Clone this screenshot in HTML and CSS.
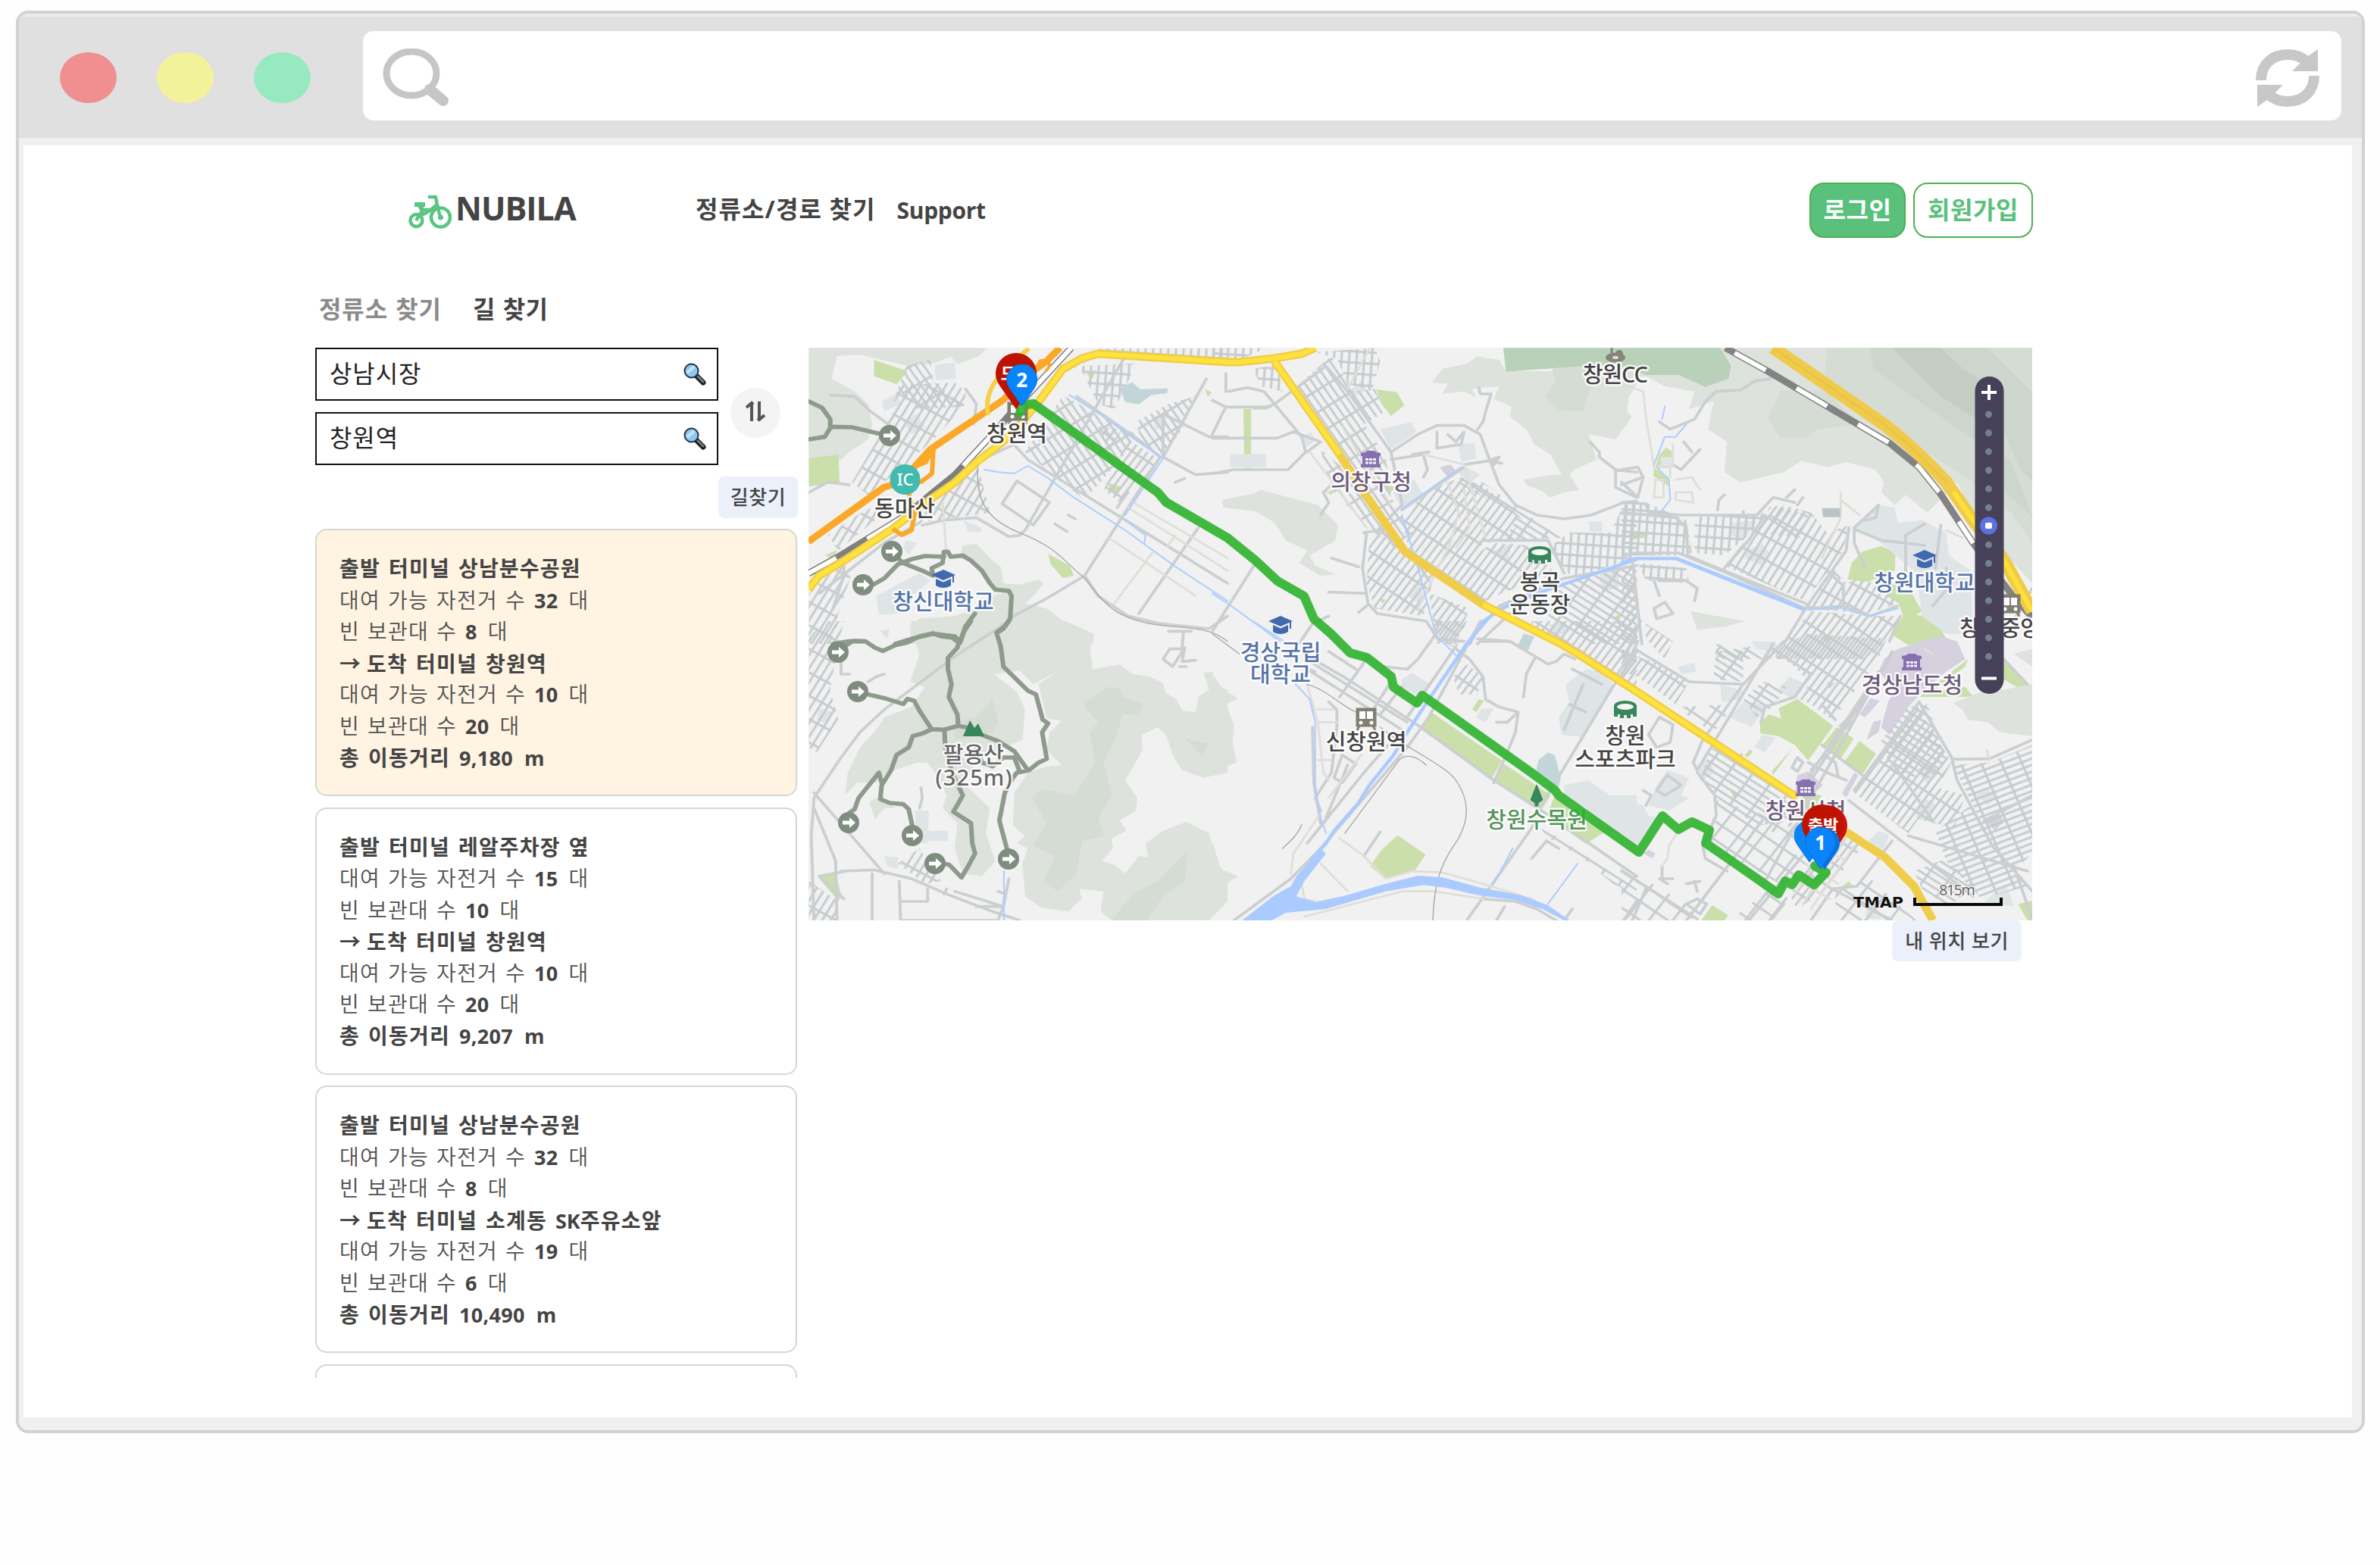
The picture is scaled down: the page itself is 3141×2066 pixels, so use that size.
FILE: index.html
```html
<!DOCTYPE html>
<html lang="ko">
<head>
<meta charset="utf-8">
<title>NUBILA</title>
<link rel="stylesheet" href="styles.css">
</head>
<body>
<div class="window">
  <div class="toolbar">
    <div class="dots"><i class="dot red"></i><i class="dot yellow"></i><i class="dot green"></i></div>
    <div class="address">
      <svg class="glass" viewBox="0 0 88 78"><ellipse cx="38" cy="33" rx="33" ry="29" fill="none" stroke="#c6c6c6" stroke-width="9"/><path d="M62 54L80 69" stroke="#c6c6c6" stroke-width="14" stroke-linecap="round"/></svg>
      <svg class="reload" viewBox="0 0 84 76"><g fill="none" stroke="#c8c8c8" stroke-width="14"><path d="M7 41C7 20 22 7 42 7C53 7 62 11 68 17"/><path d="M77 35C77 56 62 69 42 69C31 69 22 65 16 59"/></g><path d="M82 0V29H48L58 19 66 11zM2 76V47H36L26 57 18 65z" fill="#c8c8c8"/></svg>
    </div>
  </div>
  <div class="page">
    <header class="header">
      <a class="brand">
        <svg class="bike" viewBox="0 0 58 46" fill="none" stroke="#5bc583"><circle cx="10.500" cy="34" r="8" stroke-width="4.500"/><circle cx="42.500" cy="30" r="12.500" stroke-width="4.500"/><path d="M10 34L19 20 34 20M16 27C26 25 32 17 38 13M38 13L42 30M38 14L36 3H26" stroke-width="4.500" stroke-linejoin="round"/><path d="M8 13H22M14 13L19 21" stroke-width="6"/><circle cx="42.500" cy="30" r="3.500" fill="#5bc583" stroke="none"/></svg>
        <span>NUBILA</span>
      </a>
      <nav class="nav"><a>정류소/경로 찾기</a><a class="support">Support</a></nav>
      <div class="auth"><a class="login">로그인</a><a class="signup">회원가입</a></div>
    </header>
    <div class="tabs"><a class="tab">정류소 찾기</a><a class="tab active">길 찾기</a></div>
    <main class="main">
      <aside class="sidebar">
        <div class="search">
          <div class="fields">
            <div class="field"><span>상남시장</span><svg class="loupe" viewBox="0 0 30 30"><path d="M17 17L26 26" stroke="#1d1d1d" stroke-width="7" stroke-linecap="round"/><path d="M19 18L26 25" stroke="#6d7f84" stroke-width="3" stroke-linecap="round"/><circle cx="10.500" cy="10.500" r="9" fill="#8cc8f5" stroke="#26323a" stroke-width="2"/><path d="M5 13L14 5" stroke="#c5e5fb" stroke-width="4"/></svg></div>
            <div class="field"><span>창원역</span><svg class="loupe" viewBox="0 0 30 30"><path d="M17 17L26 26" stroke="#1d1d1d" stroke-width="7" stroke-linecap="round"/><path d="M19 18L26 25" stroke="#6d7f84" stroke-width="3" stroke-linecap="round"/><circle cx="10.500" cy="10.500" r="9" fill="#8cc8f5" stroke="#26323a" stroke-width="2"/><path d="M5 13L14 5" stroke="#c5e5fb" stroke-width="4"/></svg></div>
          </div>
          <button class="swap"><svg viewBox="0 0 28 28" fill="none" stroke="#555" stroke-width="4"><path d="M9 27V3M2 9L9 3 11 5M19 1V25M26 19L19 25 17 23"/></svg></button>
        </div>
        <button class="small find">길찾기</button>
        <section class="card selected">
          <p><b>출발 터미널 상남분수공원</b></p><p>대여 가능 자전거 수 <b class="n">32</b> 대</p><p>빈 보관대 수 <b class="n">8</b> 대</p>
          <p><b><span class="arrow">→</span> 도착 터미널 창원역</b></p><p>대여 가능 자전거 수 <b class="n">10</b> 대</p><p>빈 보관대 수 <b class="n">20</b> 대</p><p><b>총 이동거리 <span class="n">9,180</span> <span class="m">m</span></b></p>
        </section>
        <section class="card">
          <p><b>출발 터미널 레알주차장 옆</b></p><p>대여 가능 자전거 수 <b class="n">15</b> 대</p><p>빈 보관대 수 <b class="n">10</b> 대</p>
          <p><b><span class="arrow">→</span> 도착 터미널 창원역</b></p><p>대여 가능 자전거 수 <b class="n">10</b> 대</p><p>빈 보관대 수 <b class="n">20</b> 대</p><p><b>총 이동거리 <span class="n">9,207</span> <span class="m">m</span></b></p>
        </section>
        <section class="card">
          <p><b>출발 터미널 상남분수공원</b></p><p>대여 가능 자전거 수 <b class="n">32</b> 대</p><p>빈 보관대 수 <b class="n">8</b> 대</p>
          <p><b><span class="arrow">→</span> 도착 터미널 소계동 <span class="m">SK</span>주유소앞</b></p><p>대여 가능 자전거 수 <b class="n">19</b> 대</p><p>빈 보관대 수 <b class="n">6</b> 대</p><p><b>총 이동거리 <span class="n">10,490</span> <span class="m">m</span></b></p>
        </section>
        <section class="card"></section>
      </aside>
      <div class="mapcol">
<svg class="map" viewBox="1067 459 1615 756">
<defs>
  <pattern id="h57" width="74" height="25" patternUnits="userSpaceOnUse" patternTransform="rotate(57)"><path class="hl" d="M0 5H74M5 0V25"/></pattern>
  <pattern id="h30" width="27" height="80" patternUnits="userSpaceOnUse" patternTransform="rotate(30)"><path class="hl" d="M0 5H27M5 0V80"/></pattern>
  <pattern id="h32b" width="76" height="25" patternUnits="userSpaceOnUse" patternTransform="rotate(34)"><path class="hl" d="M0 5H76M5 0V25"/></pattern>
  <pattern id="h125" width="86" height="25" patternUnits="userSpaceOnUse" patternTransform="rotate(125)"><path class="hl" d="M0 5H86M5 0V25"/></pattern>
  <pattern id="h5" width="28" height="44" patternUnits="userSpaceOnUse" patternTransform="rotate(4)"><path class="hl" d="M0 5H28M5 0V44"/></pattern>
  <pattern id="h18" width="70" height="24" patternUnits="userSpaceOnUse" patternTransform="rotate(-22)"><path class="hl" d="M0 5H70M5 0V24"/></pattern>
  <pattern id="big" width="72" height="60" patternUnits="userSpaceOnUse" patternTransform="rotate(36)"><path class="hl" d="M0 5H72M5 0V60"/></pattern>
  <symbol id="go" viewBox="-15 -15 30 30" overflow="visible"><circle r="14" fill="#7f8d7e"/><path d="M-8 -2.500H1V-7L9 0 1 7V2.500H-8z" fill="#fff"/></symbol>
  <symbol id="uni" viewBox="-16 -12 32 24" overflow="visible"><path d="M-16 -5L0 -12 16 -5 0 2z" fill="#4169b0"/><path d="M-10 0L0 4.500 10 0V9C4 13 -4 13 -10 9zM12 -4H14V5H12z" fill="#4169b0"/></symbol>
  <symbol id="gov" viewBox="-13 -11 26 22" overflow="visible"><path d="M-13 -4V-8L-7 -9 -5 -11H5L7 -9 13 -8V-4zM-11 -4H11V8H-11zM-13 7H13V11H-13z" fill="#8670ae"/><path d="M-7 -1h4v3h-4zM-2 -1h4v3h-4zM3 -1h4v3h-4zM-7 3.500h4v3h-4zM-2 3.500h4v3h-4zM3 3.500h4v3h-4z" fill="#f4f1f8"/></symbol>
  <symbol id="sta" viewBox="-15 -12 30 24" overflow="visible"><path d="M-15 -5C-15 -9 -8 -12 0 -12S15 -9 15 -5V9H10V6H7V11H2V7H-2V11H-7V6H-10V9H-15z" fill="#38865b"/><ellipse cy="-4" rx="11" ry="4" fill="#f4f6f4"/></symbol>
  <symbol id="train" viewBox="-13 -15 26 30" overflow="visible"><path d="M-12 -13H12V9H-12zM-9 9L-12 15M9 9L12 15" fill="#817f72" stroke="#817f72" stroke-width="3"/><path d="M-9 -10H-1V0H-9zM1 -10H9V0H1z" fill="#fff"/><circle cx="-7" cy="5" r="2.500" fill="#fff"/><circle cx="7" cy="5" r="2.500" fill="#fff"/></symbol>
  <symbol id="pin" viewBox="-20 -20 40 56" overflow="visible"><path d="M0 35L-16 12A20 20 0 1 1 16 12z"/></symbol>
</defs>
<rect x="1067" y="459" width="1615" height="756" fill="#f1f1f1"/>
<!-- terrain -->
<g transform="translate(1060 450) scale(.35714 .33333)">
  <path class="f1" d="M21 28H680L650 60 570 92 545 62 480 90 390 100 270 70 210 55 125 60 105 150 190 200 240 250 255 330 240 390 170 440 130 480 21 490zM590 810L640 803 700 870 730 895 740 960 800 965 870 945 890 960 850 1010 820 1040 900 1060 950 1100 1000 1145 1075 1160 1070 1200H400L395 1130 430 1100 560 1090 640 1060 690 1010 740 1000 700 980 660 900 580 860zM1548 640L1568 625V660z"/>
  <path class="park" d="M262 75L385 120 345 172 262 140zM21 465L130 450 135 560 21 577zM1120 560L1178 578 1150 608zM905 843L985 890 1000 930 960 940 915 885zM80 850L125 828 115 865zM1045 130L1080 115 1070 150zM1485 190L1510 205 1495 222z"/>
  <path class="lake" d="M1170 190L1215 163 1245 192 1348 188 1345 207 1285 215 1240 252 1190 242z"/>
  <path class="b" d="M485 95L560 85 565 150 490 155zM290 240L350 205 360 250 300 280zM370 320L420 290 450 340 400 370zM270 1010L430 920 470 950 400 1010 350 1080 280 1085zM590 710L660 740 655 760 610 755zM380 790L420 800 390 845 370 820zM1290 300L1340 290 1345 340 1300 350z"/>
</g>
<g transform="translate(1060 820) scale(.35714 .33333)">
  <path class="f1" d="M400 0H970L1075 50 1060 110 1070 190 1170 172 1220 210 1280 220 1330 245 1340 285 1380 310 1400 355 1450 360 1460 300 1500 270 1480 205 1515 200 1510 260 1568 270V600L1480 620 1400 590 1370 540 1340 450 1310 420 1250 450 1255 510 1190 630 1235 700 1230 750 1170 790 1195 830 1140 860 1145 900 1105 950 1150 965 1190 1000 1240 930 1275 935 1265 880 1330 830 1415 795 1500 840 1525 950 1568 1010V1110L1500 1185H1140L1100 1150 1110 1070 1020 1060 1030 1100 980 1150 880 1135 820 1090 810 960 830 900 790 880 820 850 775 810 780 680 830 600 900 575 955 570 900 510 910 440 955 395 900 385 870 250 940 200 850 250 800 195 705 210 790 280 820 350 810 470 720 510 640 560 590 640 690 740 675 840 710 950 660 1010 590 1000 560 900 570 800 515 740 530 690 500 620 460 560 420 560 310 600 270 640 200 640 155 690 165 600 210 500 270 430 300 380 400 340 450 260 395 240 430 130 395 30zM245 715L290 690 340 740 300 740 265 785zM285 40L320 30 310 70z"/>
  <path class="f2" d="M1120 262L1170 265 1180 300 1255 330 1240 370 1180 370 1160 450 1110 560 1140 690 1090 780 1110 850 1030 870 1010 1000 940 1070 890 1030 930 930 850 890 900 800 845 700 880 665 1000 690 1080 560 1060 440 1090 400 1035 330zM1140 1185L1220 1080 1310 1030 1420 910 1410 1030 1330 1090 1270 1185zM640 380L700 310 720 400 700 440 560 470 560 400zM1410 465L1500 485 1470 530z"/>
  <path class="park" d="M55 1015L120 1000 142 1090 130 1108z"/>
  <path class="b" d="M60 345L110 360 90 410 50 390zM415 750L465 750 460 880 415 880zM460 830H535V870H460zM300 930L350 935 350 980 310 970z"/>
</g>
<g transform="translate(1600 450) scale(.35714 .33333)">
  <path class="f1" d="M35 630L150 605 180 590 300 625 390 650 465 730 455 790 400 825 360 850 380 890 455 925 400 930 320 880 350 830 270 790 230 720 160 675 40 660zM812 165L850 110 940 90 980 62 1060 75 1085 120H1300L1400 80 1568 90V170L1520 260 1545 310 1490 390 1390 370 1420 470 1340 510 1300 550 1250 450 1190 410 1160 350 1100 300 1105 260 1040 230 1060 180 960 190 975 225 930 200 850 210 870 170zM1150 550L1250 530 1320 530 1355 590 1300 600 1250 620 1220 595 1160 570z"/>
  <path class="f2" d="M1255 110L1390 90 1430 150 1395 190 1370 280 1280 275 1230 220 1270 160z"/>
  <path class="golf" d="M1075 28H1568V80L1480 90 1300 105 1085 122z"/>
  <path class="park" d="M605 192L682 203 710 255 660 297 625 250zM115 270H143V503H118zM150 260H225L200 272H150zM640 570L675 580 655 605zM1540 755H1568V785H1545zM1475 1095L1515 1080 1500 1115zM615 1020L640 1025 630 1040zM420 600L450 590 440 610z"/>
  <path class="b" d="M66 450L198 446V500H66zM620 350L735 322 755 360 660 430zM515 190L550 160 570 195 525 220zM910 410L970 405 975 465 920 480zM905 520L940 500 990 530 950 565zM670 600L745 545 780 610 700 670zM1040 830L1110 800 1090 870 1045 850zM720 1010L760 960 790 1020 770 1045zM1430 920L1500 910 1505 975 1440 995zM1390 715H1440V755H1395zM1240 1125L1300 1110 1320 1150 1270 1170zM330 380L365 360 380 395 350 420z"/>
  <path d="M840 500L880 490 900 515 870 540z" fill="#d3d0da"/>
</g>
<g transform="translate(1600 820) scale(.35714 .33333)">
  <path class="f1" d="M0 210L40 270 95 305 50 330 80 410 75 480 90 560 0 590zM0 870L30 980 95 1010 40 1050 0 1095z"/>
  <path class="park" d="M808 360L1070 552 1030 628 768 425zM1072 560L1250 690 1215 750 1046 636zM1262 700L1450 835 1380 882 1235 770zM685 848L788 925 750 985 640 1022 583 970 630 900zM985 308L1003 315 975 360 960 350z"/>
  <path class="lake" d="M1240 520L1265 530 1288 620 1280 655 1255 650 1195 600 1205 550zM1150 50L1190 60 1165 120 1125 105z"/>
  <path class="b" d="M700 230L735 205 800 245 770 300 700 260zM1380 190L1440 200 1480 250 1370 460 1290 450 1280 380 1320 320 1305 250zM1300 650L1390 630 1470 690 1568 690V850L1480 840 1300 690zM990 350L1040 345 1010 400 975 385z"/>
</g>
<g transform="translate(2140 450) scale(.35714 .33333)">
  <path class="f1" d="M-10 28H1518V960L1440 870 1300 700 1240 560 1130 680 1050 610 1010 650 960 600 970 560 940 510 830 480 760 500 665 475 600 520 440 560 380 520 390 400 320 350 340 240 250 270 270 200 160 180 90 140-10 150zM-10 180L30 200 20 280 40 300-10 340zM255 1070L300 1080 460 1110 390 1130 280 1145z"/>
  <path class="f2" d="M760 28H1518V800L1440 680 1300 560 1130 440 960 300 830 230 750 150zM540 310L590 195 760 200 880 330 720 350 690 380 590 385z"/>
  <path class="f3" d="M920 28H1350L1518 200V560L1470 500 1400 330 1300 390 1100 240 930 110zM1350 400L1440 480 1518 700 1420 600z"/>
  <path class="f4" d="M1000 28H1180L1250 100 1420 230 1340 330 1180 220z"/>
  <path class="golf" d="M-10 28H365L405 100 395 150 310 182 210 135 90 135-10 95z"/>
  <path class="park" d="M165 422L190 440 190 480 125 500 140 450zM120 503L175 540 172 575 118 535zM30 757H88V780H30zM890 835L960 812 1012 840 1010 910 910 955 835 945 850 880zM985 955L1030 965 1075 1005 1110 1070 1090 1085 1160 1100 1200 1180 1060 1205 1000 1165 1040 1090 1025 1040 980 1010zM755 1165L770 1180 755 1195 745 1182z"/>
  <path class="b" d="M145 460H188V498H145zM400 720L500 712 450 790 405 770zM460 830L520 805 550 840 520 890 455 860zM860 740L950 650 1010 660 1020 720 1110 710 1200 760 1210 850 1290 910 1300 1160 1200 1160 1110 1090 1090 920 960 800zM480 1190H570L580 1240 500 1220z"/>
</g>
<g transform="translate(2140 850) scale(.35714 .33333)">
  <path class="gv" d="M970 60L1020 20 1110-10 1180-30 1240-10 1270 60 1200 110 1120 180 1060 250 990 360 960 330 985 230 1010 180 950 110zM880 280L920 215 955 225 900 290zM800 325L830 295 865 310 825 345zM930 310L960 300 950 350 905 380zM650 520L690 505 745 560 700 600 640 590zM815 590L860 510 875 520 830 610zM1345 700L1390 670 1415 700 1380 740zM80 830L100 815 125 830 115 850zM760 150L790 155 765 180z"/>
  <path class="park" d="M512 355V310L545 280 590 295 580 255 650 218 782 325 690 462 640 400 580 365zM795 330L858 375 810 455 740 405zM880 385L940 435 890 517 822 468zM635 410L560 520 555 505zM670 590L740 600 700 670 665 640zM335 1035L395 1075 380 1095H295zM400 572L430 590 418 620zM455 440L475 418 485 428 465 450zM1412 60L1505 170 1470 178 1412 140zM1100 210L1280 60 1270 90 1150 190 1270 170 1300 210zM1465 1030L1518 1018V1095H1500zM815 960L840 940 855 960z"/>
  <path class="f1" d="M1225 235L1330 190 1420 180 1518 160V365L1400 350 1350 310 1280 300 1260 260zM1450 40L1518 20V90z"/>
  <path class="b" d="M365 160L450 185 440 220 370 230zM400 290L450 230 540 240 480 330zM490 410L520 360 570 370 530 430zM0 610L80 640 100 680 150 690 55 810 0 770zM130 560L170 500 250 530 220 600 250 610 180 660 100 640zM575 185L620 130 680 160 640 220zM1090 500L1130 465 1175 510 1130 555zM1310 600L1350 570 1390 610 1350 640zM1080 670L1120 610 1165 640 1110 700zM210 90L270 75 275 110 220 120zM270 490L320 455 345 510 300 540zM905 790L950 740 990 760 960 830zM1340 1020L1420 950 1450 1040zM900 1060L940 1020 960 1090H905z"/>
</g>
<!-- dense street blocks -->
<g transform="translate(1060 450) scale(.35714 .33333)">
  <path fill="url(#h30)" d="M350 175L560 165 600 200 600 250 500 370 370 500 240 610 180 560 330 290zM21 1000L90 930 150 890 180 920 130 1080 100 1200H21zM440 640L600 500 650 510 690 680 560 700 430 720zM90 770L200 690 330 620 300 680 130 830z"/>
  <path fill="url(#h57)" d="M820 440L960 215 1100 300 1230 370 1180 460 1040 630zM1230 320L1350 250 1450 220 1400 350 1330 460 1250 400zM380 100L470 70 480 160 600 260 420 270 350 190z"/>
  <path fill="url(#h5)" d="M960 130L1090 60 1568 100V30H1100L990 80zM1020 100L1220 90 1210 140 1150 270 1090 250z"/>
  <path fill="url(#h125)" d="M1090 340L1180 350 1130 440zM1200 390L1320 470 1270 540 1170 640 1110 590 1160 480z"/>
</g>
<g transform="translate(1060 820) scale(.35714 .33333)">
  <path fill="url(#h30)" d="M21 60L90 0H150L120 150 100 270 130 390 50 520 21 500zM21 1030L130 1110 120 1185H21zM350 960L430 900 510 1030 450 1040z"/>
</g>
<g transform="translate(1600 450) scale(.35714 .33333)">
  <path fill="url(#h57)" d="M300 190L440 60 520 200 600 190 640 280 560 330 640 450 660 620 740 760 690 800 560 580 450 400zM400 430L480 500 690 830 600 760 440 590z"/>
  <path fill="url(#h5)" d="M0 28H200L100 75H0zM380 45L600 28 620 80 590 200 500 170 460 70zM150 110L240 95 260 200 180 180zM1320 760L1470 760 1520 650 1568 650V860L1330 940 1240 820z"/>
  <path fill="url(#h125)" d="M700 700L800 590 920 540 1010 580 1140 700 1100 790 1000 800 950 900 900 960 800 890 730 850zM580 790L640 740 740 860 820 930 780 1090 600 1060 570 960zM830 940L1040 800 1160 810 1270 920 1070 1000 990 1040 900 990zM800 1000L950 1060 900 1200H830z"/>
  <path fill="url(#h32b)" d="M900 560L1000 560 1180 700 1290 780 1080 790 1130 690zM1290 960L1568 890V1200H1400L1240 1090z"/>
</g>
<g transform="translate(1600 820) scale(.35714 .33333)">
  <path fill="url(#h125)" d="M1180 0H1568V260L1400 150 1180 30zM830 0H940L900 110 840 70zM890 220L940 170 1000 220 980 290 910 290z"/>
  <path fill="url(#h32b)" d="M1210 810L1568 1060V1080L1480 1040 1370 940 1230 850z"/>
</g>
<g transform="translate(2140 450) scale(.35714 .33333)">
  <path fill="url(#h5)" d="M0 640L90 640 240 710 260 840 210 850 0 850zM270 690L510 690 560 650 480 760 380 850 270 840zM60 880L240 900 250 960 90 950z"/>
  <path fill="url(#h30)" d="M380 890L530 700 600 650 700 680 760 760 840 730 820 830 680 1030zM680 1060L780 900 830 960 880 940 960 970 1020 1040 910 1080z"/>
  <path fill="url(#h125)" d="M600 1200L700 1070 930 1090 1030 1090 990 1180 900 1260H560zM0 900L50 900 60 1200 0 1260zM90 1120L190 1190 160 1260 90 1180zM560 650L690 690 660 780 480 760z"/>
  <path fill="url(#h32b)" d="M360 1230L480 1210 560 1260H350z"/>
</g>
<g transform="translate(2140 850) scale(.35714 .33333)">
  <path fill="url(#h125)" d="M0 20L60 50 140 80 250 150 200 240 60 130 0 110zM560 30L680-40 980-20 940 80 780 300 700 240 640 210 700 160 640 90zM900 500L960 440 1090 240 1220 470 1130 640 1060 750 860 590zM1100 550L1270 600 1230 730 1080 690zM620 990L830 720 900 790 770 960 650 1050z"/>
  <path fill="url(#h32b)" d="M330 410L430 420 640 620 640 700 500 720 340 600 290 540zM450 220L520 150 610 170 560 250 500 290zM350 0L450 30 450 150 340 140zM960 380L1060 250 1130 240 1200 460 1140 530 1000 520zM1080 900L1200 850 1300 960 1210 1040 1110 970z"/>
  <path fill="url(#h18)" d="M1225 480L1360 470 1518 400V830L1450 900 1370 800 1290 620zM1160 740L1290 640 1420 860 1500 960 1330 1010 1200 860z"/>
  <path fill="url(#big)" d="M350 620L660 720 640 830 720 900 600 960 310 780 340 680zM0 880L290 1060 250 1095H0zM400 1095L560 960 620 1010 560 1095zM790 980L920 930 1090 1095H790zM200 250L390 240 380 330 320 340z"/>
</g>
<!-- secondary roads -->
<g class="road" transform="translate(1060 450) scale(.35714 .33333)">
  <path class="r2" d="M640 700L760 775 800 770 820 750 1190 60M770 400L830 470 1568 960M1568 380L1500 380 1330 290 1330 460M1330 460L1450 530 1568 520M1330 460L1490 150M1040 930L1320 460M1240 1080L1460 740M1040 930L1090 1010 1200 1090 1320 1120 1500 1140 1568 1090M1040 930L900 1020 760 1100M440 730L520 710 640 700M430 720L300 800 60 1000M1320 460L1250 400 1010 220M640 480L780 410M600 190L640 250 630 330M150 880V930L110 1060"/>
  <path class="r2" d="M790 555L910 640 850 730 735 645zM930 725L975 755M980 690L1005 705M1375 560L1410 545M1160 660L1200 600M100 215L190 220 250 280 340 350M21 600L90 560 170 570"/>
  <path class="r3" d="M1130 780L1450 1010M1220 640L1568 860M1200 660L1568 910M1290 840L1150 1040M515 640L530 850M1345 815L1375 770"/>
  <path class="rail" d="M645 480C640 620 660 700 800 760S950 860 1040 940C1120 1050 1160 1110 1350 1130 1480 1140 1520 1150 1568 1190"/>
  <path class="water" d="M670 510L720 520 780 525 830 495 900 540 1000 620 1190 750 1370 890 1568 1030M985 215L1110 300 1225 390 1330 465 1190 690M1190 710L1265 770 1260 805"/>
</g>
<g class="road" transform="translate(1060 820) scale(.35714 .33333)">
  <path class="r2" d="M760 0L560 140 300 350 210 440 140 540 40 700 30 850 40 1185M40 680L300 1000M40 740L120 950 125 1185M140 990L260 985 400 1020 540 1085 700 1150 800 1185M255 1000V1185M355 1030L360 1185H720L740 1130H640M360 1110H460V1060M160 990L60 1010 150 1100M560 1070L740 1130 745 1080 720 1070M740 1130L760 1020M1350 40H1435M1405 45L1400 110 1355 110 1330 150 1365 180 1410 105 1400 160 1450 155M1390 180H1415M240 240L270 220 300 210M140 160V210H170M430 740L440 700 435 660M520 1080L530 1060"/>
  <path class="water" d="M742 990V1185"/>
</g>
<g class="road" transform="translate(1600 450) scale(.35714 .33333)">
  <path class="r2" d="M0 235L50 262H200L230 250 330 380 345 440 280 510H80L0 525M50 260L0 370M60 200L130 185 190 200 230 250 420 100 500 200 660 440 700 640M0 385H240L300 360 400 400M350 440L400 400M660 440L760 370 830 335 930 335 990 370 1010 430 1060 570 1120 650 1200 690 1300 705 1400 690 1520 640 1568 635M560 760L610 750 700 650M570 760L555 900 575 1040 610 1080 790 1110 840 1190M740 450L800 440M660 470L780 450 795 510 780 540M930 490L1020 475 1070 485M1020 475L1060 460 1040 490M700 670L930 500M800 950L740 850M940 1200L1060 1050 1300 940 1568 890M980 1200L1100 1080M1000 790L1240 790 1260 830 1300 920M990 1190H1100M980 350L1000 320 1010 280 1030 210 990 210 985 185M830 360V425L920 410 930 360 900 400 870 370M1395 400L1430 440 1430 460 1490 510 1568 520M1490 510L1490 580 1568 620M440 860L540 895M430 995L560 1000M540 1075L570 1050M0 1150L160 880M400 690L430 640 410 600 440 570M50 130V200M320 1200L370 1120 430 1090"/>
  <path class="r3" d="M360 440L570 740M780 450L930 490 1010 780M500 190L580 30M480 340L560 480 660 650M870 560L910 680 880 800 760 1060M930 590L950 740 900 820"/>
  <path class="water" d="M0 1000L70 1050 250 1190M700 690L760 900 830 1180M700 665L920 500"/>
  <path class="water w2" d="M950 1200L990 1120 1070 1060 1200 1000 1568 865"/>
</g>
<g class="road" transform="translate(1600 820) scale(.35714 .33333)">
  <path class="r2" d="M80 1185L290 1020 400 900 720 500 800 380 990 0M840 0L820 60 760 150 720 190 630 180 560 130M900 110L950 150 1000 220 1010 310 1060 340 1130 360 1120 440 1090 520 1040 640M720 380L900 100M340 130L500 230 770 420 1040 630 1230 760 1568 1010M360 160L720 400M350 190L700 430M980 70L1100 80 1240 170 1270 160 1300 130 1340 150M1190 150L1160 210 1150 300M1210 750L1180 820 940 1185M1210 740L1480 260 1568 120M1000 1100L1120 1110 1200 1140 1270 1185M1130 360L1090 400 1050 400M560 930L620 835M1180 940L1235 870 1280 900M930 80L840 70M700 260L620 370M570 150L470 300M660 240L570 390M430 120L530 190M380 200L330 180M350 880L560 600 650 490M280 1185M1300 1185L1330 1140M1050 1185L1080 1130M1568 1110L1520 1185M370 420L375 640 400 800M1330 190L1440 250M1300 430L1370 250M1320 330L1380 360"/>
  <path class="r2" d="M480 530L530 565 480 640 450 620zM430 320L460 350 460 420 440 600 380 700 400 750M500 570L420 780"/>
  <path class="r3" d="M350 250L390 400 410 600 430 630M400 760L300 920 290 1000M470 860L560 930 640 1020 740 990 850 995 1000 1040 1180 1100 1260 1150M330 1040L340 1100 380 1110M400 960L500 1070M340 1170L700 1070 820 1070 1000 1100M550 530L430 700M390 350H450M390 400H460M390 550H440"/>
  <path class="rail" d="M0 50L100 130M350 250C420 270 470 330 530 360M620 420C740 520 860 570 900 630 950 710 950 780 910 860 860 940 820 1000 815 1185M490 840L690 550C720 520 760 540 790 570M260 900C290 870 320 840 330 805"/>
  <path class="water" d="M150 0L280 90M300 240L360 310 380 400V650L400 780 420 840M840 70L905 140M1110 900L1040 1040M1350 960L1240 1120"/>
  <path class="water w2" d="M1010 0L940 90 800 310 720 440 670 530 580 650 540 720 450 830 420 880 370 940"/>
  <path fill="#abcbff" d="M110 1185L230 1085 290 1050 310 1010 360 950 400 900 420 920 340 1030 310 1090 380 1112 480 1090 640 1040 760 1008 850 1015 990 1055 1140 1085 1240 1125 1320 1185H1300L1220 1140 1120 1105 980 1085 860 1055 780 1045 640 1070 420 1140 270 1155 220 1185z"/>
</g>
<g class="road" transform="translate(2140 450) scale(.35714 .33333)">
  <path class="r2" d="M550 150L490 160 440 195 350 200 310 240 270 310 180 350 140 320M0 640L90 645 100 680 220 690 500 690 560 620 640 640M0 680L200 700 240 740 245 850 380 910 680 1040M0 860L40 840 210 840 390 920 680 1060 820 1050 920 1090 1020 1050M40 870L75 1200M10 1260L70 1110M600 1200L680 1060 830 830 840 740M380 900L470 790 530 690M860 740L860 800 900 900M860 740L950 650 940 700 900 710M870 750L960 790 1120 810M1050 920V770L1120 725M1180 730L1160 900M1200 900L1220 960 1150 1050M0 570L80 540 60 620 0 560M80 540L60 500 0 510M140 950L240 950 280 980 270 1030M120 950L140 1010M160 1035L190 1080 130 1100 120 1060zM355 670L360 630 380 610M450 690V675M610 620L640 590M650 650L670 620M290 430L220 510 190 490M230 400L260 440M680 1060L800 1060M820 1050L820 970 760 910M1030 1090L990 1190M1518 980L1400 1200"/>
  <path class="r3" d="M0 170L80 200 90 300 120 500 180 500 180 540M190 410V500M200 600H260L265 640 200 630zM200 550L260 540 290 590M125 550H155V620H120zM810 600V700L740 860M810 630L880 690M1200 750L1260 780"/>
  <path class="water" d="M160 260L150 310M240 330L200 380 160 380 120 490M130 500L175 550 180 630 150 670M0 880L50 860H210L680 1060M690 1065L800 1055 910 1090 1020 1060"/>
  <path class="water w2" d="M0 880L50 862H200L440 965 670 1062"/>
  <path fill="#bcc3c7" class="depot" d="M740 662H808V698H745z"/>
</g>
<g class="road" transform="translate(2140 850) scale(.35714 .33333)">
  <path class="r2" d="M0 130L60-10M50 20L250 150 450 160M450 160L600-10M280 500L560 0M280 500L265 470 300 380 450 160M280 510L345 600 350 680 300 800 310 850 390 900M560 20L700 120 640 210 530 250 515 310M1000 30L520 960M950 110L560 740M700 540L990 60M620 720L690 600M740 240L790 300M690 470L760 510 830 540M740 400L890 520M860 580L1100 230 1220 450 1240 540 1370 800 1518 980M1220 457L1360 455 1518 380M1060 760L1500 900M840 620L1300 1000M1000 470L1150 700M780 970L870 960 1000 780M780 970L700 1095M760 960L1000 1095M0 900L280 1090M240 1095L520 700M470 1095L700 800M40 1095L90 970M1450 880L1518 1090M150 880V930H190M140 930L170 950M240 950L290 940M270 940L280 980M80 580L110 600 90 640M170 520L220 560 160 600 130 580zM100 360L140 290 190 320 180 390 130 410zM550 1095L600 1030M1340 700L1518 600M1412 60L1500 160"/>
  <path class="r3" d="M150 880L170 850 175 800 210 740M640 990L800 740M670 1030L830 770M700 1050L860 800M640 930L770 1010M680 870L800 950M730 800L830 860M1360 460L1350 420M1120 20L1150 40"/>
  <path class="r2" fill="none" d="M240 1030L280 1010 315 1030 290 1070zM630 490L650 450 670 470 650 505zM700 500L750 440 790 470 800 520"/>
</g>
<!-- hiking trails -->
<g class="trail" transform="translate(1060 450) scale(.35714 .33333)">
  <path d="M21 240L70 265 100 310V345L80 380 21 390M100 340L180 342 290 370M350 860L370 880 440 910 480 930 475 900 515 880 520 835 535 835 545 855 590 850 620 870 660 910 690 960 710 985 760 990 770 1010 765 1100 745 1130 715 1155M260 965L300 940 350 885 400 865 450 852 520 855M635 1080L600 1130 580 1190M110 1200L170 1190 220 1190M340 1200L400 1180 480 1160 560 1170 580 1190"/>
</g>
<g class="trail" transform="translate(1060 820) scale(.35714 .33333)">
  <path d="M160 95L185 78 230 80 265 105 295 118 340 95 385 85 430 60 480 48 510 60 550 65 575 85 570 105 535 145 535 190 548 250 538 300 570 370 573 415 600 420M620 0L595 40 580 85M760 0L740 30 715 48 730 100 740 180 830 275 860 290 885 390 905 405 883 440 900 545 870 560 835 590 790 600 775 620 745 680 725 790 755 910M240 290L300 305 370 328 385 308 410 315 430 355 475 428 520 430 573 415M475 428L440 445 405 455 390 500 345 530 325 590 290 650 285 705 320 720 370 725 390 745 405 820M290 640L280 600 205 700 190 745 170 760M522 430L525 500 550 600 590 690 555 755 620 800 625 880 635 920 610 970 585 1015 540 965 520 960M660 450L720 475 780 515 830 590M640 500L660 560 700 575 740 540 780 540 800 595"/>
</g>
<!-- trunk roads and railways -->
<g class="line">
  <path d="M1067 757L1103 737 1196 680 1228 653 1260 627 1310 573 1339 540 1414 459" stroke="#7f7f7f" stroke-width="9"/>
  <path d="M1067 757L1103 737 1196 680 1228 653 1260 627 1310 573 1339 540 1414 459" stroke="#fff" stroke-width="6" stroke-dasharray="42 48 70 90 68 55 110 40" stroke-linecap="butt"/>
  <path d="M2277 459L2333 490 2494 585 2533 617 2561 652 2604 717 2655 785 2682 815" stroke="#838383" stroke-width="9"/>
  <path d="M2277 459L2333 490 2494 585 2533 617 2561 652 2604 717" stroke="#fff" stroke-width="6" stroke-dasharray="47 47" stroke-dashoffset="-14" stroke-linecap="butt"/>
  <g>
    <path class="yc" d="M1067 778L1081 760 1114 740 1178 698 1231 657 1260 637 1289 610 1324 583 1346 560 1371 530 1403 487 1428 473 1449 467 1620 478 1636 478 1682 473 1718 467 1736 459"/>
    <path class="yc" d="M1682 477L1768 600 1800 650 1854 728 1957 798 2060 850 2082 863 2160 913 2372 1053M2436 1098L2488 1132 2526 1170 2551 1215"/>
    <path class="yi" d="M1067 778L1081 760 1114 740 1178 698 1231 657 1260 637 1289 610 1324 583 1346 560 1371 530 1403 487 1428 473 1449 467 1620 478 1636 478 1682 473 1718 467 1736 459M1682 477L1768 600M1957 798L2060 850 2082 863 2160 913 2372 1053"/>
    <path d="M2340 459L2486 560Q2526 590 2569 637L2604 687 2645 740 2682 807" stroke="#f0cb4b" stroke-width="17"/>
    <path d="M2340 459L2486 560Q2526 590 2569 637" stroke="#e9c445" stroke-width="3"/>
    <path d="M2578 649L2604 687 2645 740 2682 807" stroke="#ffe13a" stroke-width="6"/>
  </g>
  <path d="M1067 715L1167 643 1178 640 1206 617 1228 593 1324 528 1367 487 1381 477 1399 459" stroke="#fba829" stroke-width="9"/>
  <path d="M1198 620L1222 610 1232 590M1232 590L1230 625 1216 636 1206 636M1199 650L1207 678 1203 700 1190 706 1178 698" stroke="#fba829" stroke-width="6"/>
  <path d="M1304 548C1298 515 1315 496 1358 460" stroke="#f6d04a" stroke-width="6"/>
  <path d="M1374 487Q1366 474 1380 476Q1390 480 1380 490" stroke="#fba829" stroke-width="4"/>
</g>
<!-- points of interest -->
<use href="#train" x="1330" y="530" width="26" height="30"/><use href="#train" x="1790" y="934" width="26" height="30"/><use href="#train" x="2640" y="784" width="26" height="30"/>
<use href="#uni" x="1229" y="752" width="32" height="24"/><use href="#uni" x="1674" y="813" width="32" height="24"/><use href="#uni" x="2524" y="726" width="32" height="24"/>
<use href="#gov" x="1796" y="595" width="26" height="22"/><use href="#gov" x="2510" y="863" width="26" height="22"/><use href="#gov" x="2370" y="1029" width="26" height="22"/>
<use href="#sta" x="2017" y="721" width="30" height="24"/><use href="#sta" x="2130" y="925" width="30" height="24"/>
<path d="M1271 972L1280 951 1286 961 1291 955 1299 972z" fill="#38865b"/>
<path d="M2028 1036L2036 1056 2030 1060V1064H2026V1060L2020 1056z" fill="#38865b" stroke="#38865b" stroke-width="1"/>
<ellipse cx="2132" cy="472" rx="13" ry="6.500" fill="#87857a"/><path d="M2127 459V468H2133" stroke="#87857a" stroke-width="3" fill="none"/><circle cx="2137" cy="467" r="5" fill="#87857a"/><ellipse cx="2132" cy="472" rx="4" ry="2" fill="#d9e4d9"/>
<use href="#go" x="1159" y="560" width="30" height="30"/><use href="#go" x="1162" y="713" width="30" height="30"/><use href="#go" x="1124" y="757" width="30" height="30"/><use href="#go" x="1091" y="846" width="30" height="30"/><use href="#go" x="1117" y="898" width="30" height="30"/><use href="#go" x="1105" y="1071" width="30" height="30"/><use href="#go" x="1189" y="1088" width="30" height="30"/><use href="#go" x="1219" y="1125" width="30" height="30"/><use href="#go" x="1316" y="1119" width="30" height="30"/>
<circle cx="1194.600" cy="633" r="20" fill="#41bab0"/><text class="ic" x="1194.600" y="641">IC</text>
<g class="label">
  <text x="1342" y="583">창원역</text><text x="1194" y="682">동마산</text><text class="blue" x="1245" y="805">창신대학교</text>
  <text class="hill" x="1285" y="1007">팔용산</text><text class="hill" x="1285" y="1037" textLength="101">(325m)</text>
  <text class="plum" x="1809.500" y="647">의창구청</text><text x="2132" y="505" textLength="86">창원CC</text>
  <text x="2032.500" y="779">봉곡</text><text x="2032.500" y="809">운동장</text>
  <text class="blue" x="1690" y="872">경상국립</text><text class="blue" x="1690" y="901">대학교</text><text x="1803" y="990">신창원역</text>
  <text class="leaf" x="2028" y="1093">창원수목원</text><text x="2145" y="982">창원</text><text x="2145" y="1013">스포츠파크</text>
  <text class="plum" x="2383" y="1081">창원시청</text><text class="plum" x="2523.500" y="915">경상남도청</text><text class="blue" x="2540" y="780">창원대학교</text><text x="2653" y="840">창원중앙역</text>
</g>
<path class="route" d="M1346 545L1348 535 1364 533 1528 650 1539 663 1620 710 1657 740 1686 767 1721 787 1734 817 1757 837 1782 862 1804 868 1836 893 1839 907 1870 928 1877 918 2021 1020 2052 1043 2057 1050 2163 1125 2194 1077 2215 1095 2233 1085 2256 1096 2251 1113 2319 1160 2347 1180 2356 1163 2365 1168 2374 1155 2394 1168 2410 1152 2395 1143"/>
<g class="pins">
  <use href="#pin" x="1314" y="466" width="54" height="75.600" fill="#bf1200"/><text x="1341" y="501" class="big">도착</text>
  <use href="#pin" x="1328.600" y="481" width="40" height="56" fill="#0a84fb" stroke="#0670dc"/><text x="1348.600" y="511">2</text>
  <use href="#pin" x="2368" y="1083" width="40" height="56" fill="#0a84fb" stroke="#0670dc"/>
  <use href="#pin" x="2384" y="1063" width="54" height="75.600" fill="#cb1208"/>
  <use href="#pin" x="2378" y="1062" width="54" height="75.600" fill="#bf1200"/><text x="2406" y="1098" class="big">출발</text>
  <use href="#pin" x="2388" y="1093" width="40" height="56" fill="#0a73de"/>
  <use href="#pin" x="2382.500" y="1092" width="40" height="56" fill="#0a84fb" stroke="#0670dc"/><text x="2402.500" y="1122">1</text>
</g>
<text class="tmap" x="2446" y="1198" textLength="66" lengthAdjust="spacingAndGlyphs">TMAP</text><text class="scale" x="2583" y="1182" textLength="48">815m</text>
<path d="M2527 1185V1194H2641V1185" fill="none" stroke="#0a0a0a" stroke-width="4"/>
<g>
  <rect x="2606.500" y="497" width="38" height="419" rx="19" fill="#464159"/>
  <path d="M2615 518H2635M2625 508V528M2615 895.500H2635" stroke="#fff" stroke-width="4"/>
  <path d="M2624.500 547V867" stroke="#74818b" stroke-width="9" stroke-linecap="round" stroke-dasharray="0.010 24.580"/>
  <circle cx="2624.500" cy="694" r="11.500" fill="#5b70e2"/><rect x="2620" y="690" width="9" height="8" rx="2" fill="#fff"/>
</g>
</svg>
        <button class="small locate">내 위치 보기</button>
      </div>
    </main>
  </div>
</div>
</body>
</html>
```
FILE: styles.css
```css
* { box-sizing: border-box; }
body { margin: 0; background: #fefefe; color: #444; font-family: "Open Sans", "Noto Sans CJK KR", sans-serif; overflow: hidden; }
p { margin: 0; }
button { border: 0; padding: 0; font-family: inherit; color: #444; }
.window { width: 3100px; height: 1878px; margin: 14px 0 0 21px; border: 4px solid #d2d2d2; border-radius: 16px; background: #f0f0f0; display: flex; flex-direction: column; align-items: stretch; padding: 0 13px 17px 6px; overflow: hidden; }
.toolbar { height: 164px; flex: none; margin: 0 -13px 10px -6px; background: #e0e0e0; border-top: 4px solid #ececec; display: flex; align-items: center; padding: 0 27px 0 54px; }
.dots { display: flex; gap: 53px; width: 400px; }
.dot { width: 75px; height: 67px; border-radius: 50%; }
.red { background: #ef8f8f; } .yellow { background: #f2f29b; } .green { background: #97e9c0; }
.address { flex: 1; height: 118px; margin-bottom: 4px; background: #fff; border-radius: 14px; display: flex; justify-content: space-between; align-items: center; padding: 6px 29px 0 26px; }
.glass { width: 88px; height: 78px; }
.reload { width: 84px; height: 76px; }
.page { flex: 1; background: #fff; padding: 49px 421px 0 385px; display: flex; flex-direction: column; min-height: 0; }
.header { display: flex; height: 73px; align-items: center; padding-left: 123px; }
.brand { display: flex; align-items: center; gap: 4px; width: 379px; font-size: 43px; font-weight: 700; line-height: 60px; }
.brand span { margin-top: -5px; letter-spacing: -1px; }
.bike { width: 58px; height: 46px; margin-top: 4px; }
.nav { display: flex; gap: 28px; align-items: center; font-size: 32px; font-weight: 700; line-height: 44px; color: #444; letter-spacing: 1.1px; }
.nav a { margin-top: -3px; }
.nav .support { font-weight: 700; font-size: 30px; letter-spacing: -.3px; margin-top: 1px; }
.auth { margin-left: auto; display: flex; gap: 10px; }
.auth a { height: 73px; border: 2px solid #4cb050; border-radius: 19px; font-size: 32px; font-weight: 700; line-height: 67px; text-align: center; letter-spacing: .5px; }
.login { width: 127px; background: #59c17c; color: #fff; }
.signup { width: 158px; color: #59c17c; background: #fff; }
.tabs { display: flex; gap: 41px; height: 50px; margin: 69px 0 26px; padding-left: 5px; font-size: 32px; font-weight: 700; line-height: 50px; letter-spacing: .9px; word-spacing: 1px; }
.tab { color: #8b8b8b; }
.tab.active { color: #444; letter-spacing: .5px; }
.main { display: grid; grid-template-columns: 637px 1615px; gap: 14px; }
.sidebar { height: 1360px; overflow: hidden; display: flex; flex-direction: column; }
.search { display: flex; gap: 16px; align-items: center; }
.fields { width: 532px; display: flex; flex-direction: column; gap: 15px; }
.field { height: 70px; border: 2px solid #111; display: flex; justify-content: space-between; align-items: center; padding: 0 14px 0 17px; font-size: 32px; line-height: 64px; color: #222; letter-spacing: .9px; }
.field span { margin-top: -3px; }
.loupe { width: 30px; height: 30px; }
.swap { width: 66px; height: 66px; border-radius: 50%; background: #f4f4f4; margin-top: 16px; display: flex; align-items: center; justify-content: center; padding-bottom: 4px; }
.swap svg { width: 28px; height: 28px; }
.small { background: #ebf0fb; border-radius: 8px; font-size: 26px; font-weight: 500; letter-spacing: .5px; line-height: 52px; height: 55px; padding-bottom: 1px; }
.find { width: 105px; align-self: flex-end; margin: 15px 0 14px; flex: none; }
.card { flex: none; width: 636px; height: 353px; border: 2px solid #d6d6d6; border-radius: 15px; margin-bottom: 14.500px; padding: 30px; font-size: 28px; line-height: 41.600px; letter-spacing: 1.200px; word-spacing: 1.600px; color: #505050; }
.card b { font-weight: 600; color: #444; word-spacing: 2.600px; }
.card p { white-space: nowrap; font-weight: 350; height: 41.600px; }
.card .n { font-size: 27px; font-weight: 700; margin: 0 4px 0 1px; letter-spacing: .3px; }
.card .m { font-weight: 700; font-size: 27px; letter-spacing: 0; }
.card .arrow { font-family: "Noto Sans CJK KR"; letter-spacing: -3px; }
.selected { background: #fff3e1; }
.mapcol { display: flex; flex-direction: column; align-items: flex-end; }
.map { width: 1615px; height: 756px; display: block; font-family: "Noto Sans", "Noto Sans CJK KR", sans-serif; }
.locate { width: 171px; height: 54px; margin-right: 14px; }
.hl { stroke: #c5cbce; stroke-width: 8.500; fill: none; }
.f1 { fill: #dde2dc; } .f2 { fill: #d5dcd4; } .f3 { fill: #cdd6cc; } .f4 { fill: #c3cdc2; }
.park { fill: #cbdfab; } .golf { fill: #b9d1b9; } .lake { fill: #c2d6d9; } .b { fill: #dfe4e6; } .gv { fill: #d5d1de; }
.road path { fill: none; stroke-linejoin: round; stroke-linecap: round; }
.road path[fill^="#"] { fill: #abcbff; stroke: none; }
.road path.depot { fill: #bcc3c7; }
.r2 { stroke: #cccfd1; stroke-width: 11; }
.r3 { stroke: #e0ded8; stroke-width: 8; }
.rail { stroke: #a9a9a9; stroke-width: 4; }
.water { stroke: #b0ceff; stroke-width: 6; }
.w2 { stroke-width: 13; stroke: #abcbff; }
.trail path { fill: none; stroke: #8e9b8c; stroke-width: 17; stroke-linejoin: round; stroke-linecap: round; }
.line path { fill: none; stroke-linejoin: round; }
.line .yc { stroke: #f0cd49; stroke-width: 11; }
.line .yi { stroke: #ffe23c; stroke-width: 6; }
.route { fill: none; stroke: #2db32d; stroke-opacity: .9; stroke-width: 12; stroke-linejoin: round; stroke-linecap: round; }
.label text { font-size: 29px; font-weight: 500; fill: #444; text-anchor: middle; stroke: #fff; stroke-width: 5px; stroke-opacity: .85; paint-order: stroke; stroke-linejoin: round; }
.label .blue { fill: #5473aa; } .label .plum { fill: #6e5b7c; } .label .leaf { fill: #55935b; } .label .hill { fill: #666; }
.ic { font-size: 22px; font-weight: 500; fill: #fff; text-anchor: middle; }
.pins text { fill: #fff; font-size: 26px; font-weight: 700; text-anchor: middle; }
.pins .big { font-size: 22px; }
.tmap { font: 700 20px "DejaVu Sans", sans-serif; fill: #111; }
.scale { font-size: 20px; fill: #666; text-anchor: middle; stroke: #fff; stroke-width: 2px; paint-order: stroke; }
```
